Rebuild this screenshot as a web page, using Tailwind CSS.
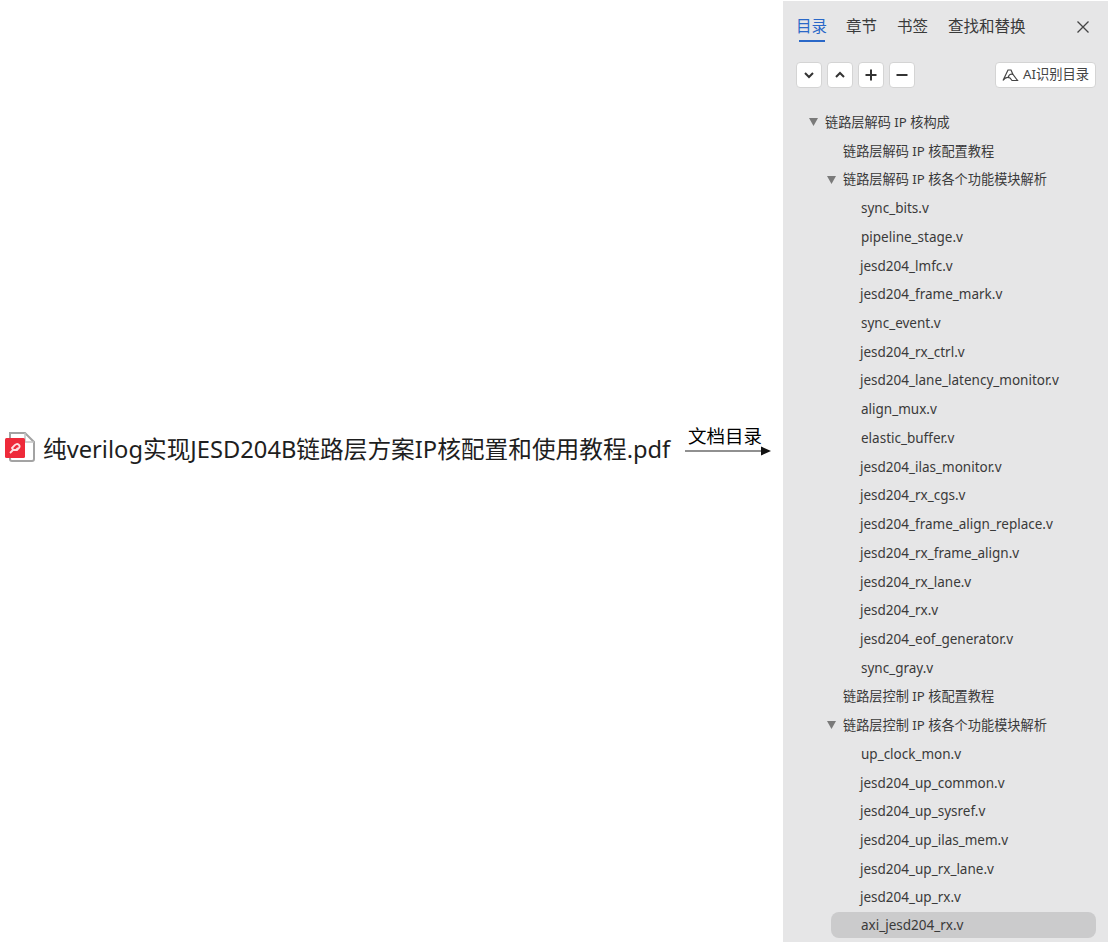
<!DOCTYPE html>
<html lang="zh-CN">
<head>
    <meta charset="UTF-8" />
    <title>文档目录</title>
    <script src="https://cdn.jsdelivr.net/npm/@tailwindcss/browser@4"></script>
</head>
<body class="bg-white w-[1110px] h-[944px] overflow-hidden flex font-['Noto_Sans','Noto_Sans_CJK_SC',sans-serif]">

    <!-- left: file name and arrow -->
    <div class="w-[783px] shrink-0 pt-[418px] flex items-start">
        <svg class="ml-[4px] mt-[13px] shrink-0" width="32" height="32" viewBox="0 0 32 32">
            <path d="M6 2h15l9 9v17a2 2 0 0 1-2 2H8a2 2 0 0 1-2-2z" fill="#fff" stroke="#a3a3a3" stroke-width="2"/>
            <path d="M21 2v9h9" fill="none" stroke="#c4c4c4" stroke-width="1.5"/>
            <rect x="1" y="7" width="20" height="20" rx="1.5" fill="#ee2a3a"/>
            <path d="M6 22l3-3h3l2-2M8 17l3-3a2.5 2.5 0 0 1 4 3l-2 2h-3a2.5 2.5 0 0 1-2-2z" fill="none" stroke="#ffdfe1" stroke-width="1.8"/>
        </svg>
        <div class="ml-[7px] mt-[13px] w-[630px] shrink-0 text-[23.7px] leading-[36px] text-[#1e1e1e] whitespace-nowrap">纯verilog实现JESD204B链路层方案IP核配置和使用教程.pdf</div>
        <div class="ml-[12px] w-[86px] shrink-0 flex flex-col">
            <div class="pl-[3px] pt-[6px] text-[18.5px] leading-[26px] text-black font-['Liberation_Sans','Noto_Sans_CJK_SC',sans-serif] whitespace-nowrap">文档目录</div>
            <svg class="-mt-[5px]" width="86" height="12" viewBox="0 0 86 12">
                <path d="M0 6h77" stroke="#222" stroke-width="1.2"/>
                <path d="M76 1.5L86 6L76 10.5z" fill="#111"/>
            </svg>
        </div>
    </div>

    <!-- right: outline panel -->
    <div class="w-[325px] h-[941px] mt-[1px] shrink-0 bg-[#e6e6e7] flex flex-col text-[#3a3a3a]">
        <div class="h-[43px] pt-[14px] pl-[13px] pr-[18px] flex items-start text-[15.5px] leading-[22px]">
            <div class="flex flex-col items-center w-[31px]">
                <span class="text-[#2a68c8] whitespace-nowrap">目录</span>
                <span class="w-[26px] h-[2px] mt-[3px] bg-[#2a68c8]"></span>
            </div>
            <span class="ml-[19px] whitespace-nowrap">章节</span>
            <span class="ml-[20px] whitespace-nowrap">书签</span>
            <span class="ml-[20px] whitespace-nowrap">查找和替换</span>
            <svg class="ml-auto mt-[5px]" width="14" height="14" viewBox="0 0 14 14"><path d="M1.5 1.5l11 11M12.5 1.5l-11 11" stroke="#444" stroke-width="1.3"/></svg>
        </div>

        <div class="mt-[18px] pl-[13px] pr-[12px] flex items-center gap-[5px]">
            <button class="w-[26px] h-[26px] bg-white rounded-[4px] border border-[#d4d4d4] flex items-center justify-center"><svg width="12" height="12" viewBox="0 0 12 12"><path d="M2 4l4 4 4-4" fill="none" stroke="#333" stroke-width="2"/></svg></button>
            <button class="w-[26px] h-[26px] bg-white rounded-[4px] border border-[#d4d4d4] flex items-center justify-center"><svg width="12" height="12" viewBox="0 0 12 12"><path d="M2 8l4-4 4 4" fill="none" stroke="#333" stroke-width="2"/></svg></button>
            <button class="w-[26px] h-[26px] bg-white rounded-[4px] border border-[#d4d4d4] flex items-center justify-center"><svg width="12" height="12" viewBox="0 0 12 12"><path d="M6 0.5v11M0.5 6h11" stroke="#333" stroke-width="2"/></svg></button>
            <button class="w-[26px] h-[26px] bg-white rounded-[4px] border border-[#d4d4d4] flex items-center justify-center"><svg width="12" height="12" viewBox="0 0 12 12"><path d="M0.5 6h11" stroke="#333" stroke-width="2"/></svg></button>
            <button class="ml-auto w-[101px] h-[26px] bg-white rounded-[4px] border border-[#d4d4d4] flex items-center justify-center gap-[4px] text-[13.3px] text-[#444] whitespace-nowrap">
                <svg width="17" height="14" viewBox="0 0 17 14"><path d="M1 12.5L6 2h3l2 4.500M1 12.500c2-3 5-3.500 7-2.500l2 2.500h5.500L11 6.500a3 3 0 0 0-4.500 2.500" fill="none" stroke="#444" stroke-width="1.2"/></svg>
                AI识别目录
            </button>
        </div>

        <ul class="mt-[20px] text-[13.5px] leading-[28.72px] whitespace-nowrap">
            <li class="h-[28.72px] pl-[26px] flex items-center text-[13.2px]"><svg class="mr-[7px]" width="9" height="8" viewBox="0 0 9 8"><path d="M0 0h9L4.5 8z" fill="#7a7a7a"/></svg>链路层解码 IP 核构成</li>
            <li class="h-[28.72px] pl-[60px] text-[13.2px]">链路层解码 IP 核配置教程</li>
            <li class="h-[28.72px] pl-[44px] flex items-center text-[13.2px]"><svg class="mr-[7px]" width="9" height="8" viewBox="0 0 9 8"><path d="M0 0h9L4.5 8z" fill="#7a7a7a"/></svg>链路层解码 IP 核各个功能模块解析</li>
            <li class="h-[28.72px] pl-[78px]">sync_bits.v</li>
            <li class="h-[28.72px] pl-[78px]">pipeline_stage.v</li>
            <li class="h-[28.72px] pl-[77px]">jesd204_lmfc.v</li>
            <li class="h-[28.72px] pl-[77px]">jesd204_frame_mark.v</li>
            <li class="h-[28.72px] pl-[78px]">sync_event.v</li>
            <li class="h-[28.72px] pl-[77px]">jesd204_rx_ctrl.v</li>
            <li class="h-[28.72px] pl-[77px]">jesd204_lane_latency_monitor.v</li>
            <li class="h-[28.72px] pl-[78px]">align_mux.v</li>
            <li class="h-[28.72px] pl-[78px]">elastic_buffer.v</li>
            <li class="h-[28.72px] pl-[77px]">jesd204_ilas_monitor.v</li>
            <li class="h-[28.72px] pl-[77px]">jesd204_rx_cgs.v</li>
            <li class="h-[28.72px] pl-[77px]">jesd204_frame_align_replace.v</li>
            <li class="h-[28.72px] pl-[77px]">jesd204_rx_frame_align.v</li>
            <li class="h-[28.72px] pl-[77px]">jesd204_rx_lane.v</li>
            <li class="h-[28.72px] pl-[77px]">jesd204_rx.v</li>
            <li class="h-[28.72px] pl-[77px]">jesd204_eof_generator.v</li>
            <li class="h-[28.72px] pl-[78px]">sync_gray.v</li>
            <li class="h-[28.72px] pl-[60px] text-[13.2px]">链路层控制 IP 核配置教程</li>
            <li class="h-[28.72px] pl-[44px] flex items-center text-[13.2px]"><svg class="mr-[7px]" width="9" height="8" viewBox="0 0 9 8"><path d="M0 0h9L4.5 8z" fill="#7a7a7a"/></svg>链路层控制 IP 核各个功能模块解析</li>
            <li class="h-[28.72px] pl-[78px]">up_clock_mon.v</li>
            <li class="h-[28.72px] pl-[77px]">jesd204_up_common.v</li>
            <li class="h-[28.72px] pl-[77px]">jesd204_up_sysref.v</li>
            <li class="h-[28.72px] pl-[77px]">jesd204_up_ilas_mem.v</li>
            <li class="h-[28.72px] pl-[77px]">jesd204_up_rx_lane.v</li>
            <li class="h-[28.72px] pl-[77px]">jesd204_up_rx.v</li>
            <li class="h-[26px] ml-[48px] mr-[12px] pl-[30px] bg-[#cbcbcc] rounded-[8px] leading-[26px]">axi_jesd204_rx.v</li>
        </ul>
    </div>

</body>
</html>
